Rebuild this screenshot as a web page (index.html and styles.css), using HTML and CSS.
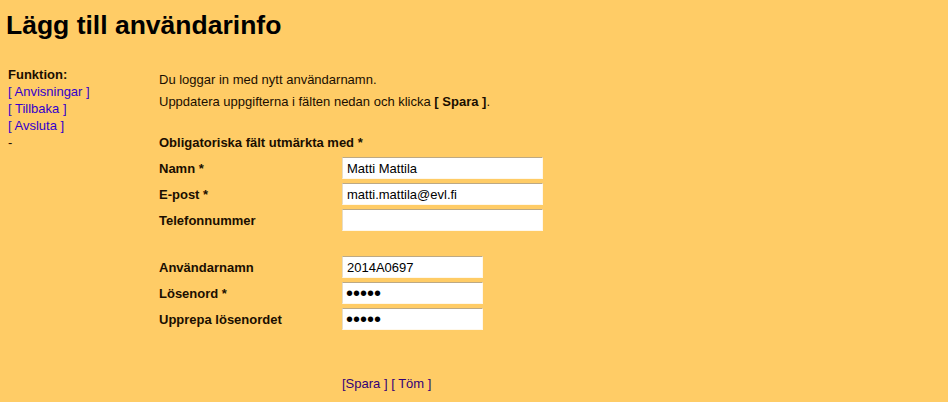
FILE: index.html
```html
<!DOCTYPE html>
<html lang="sv">
<head>
<meta charset="utf-8">
<title>Lägg till användarinfo</title>
<link rel="stylesheet" href="styles.css">
</head>
<body>
<h1 class="title">Lägg till användarinfo</h1>
<div class="layout">
  <nav class="sidebar">
    <div class="side-head">Funktion:</div>
    <a class="side-link" href="#">[ Anvisningar ]</a>
    <a class="side-link" href="#">[ Tillbaka ]</a>
    <a class="side-link" href="#">[ Avsluta ]</a>
    <div class="side-dash">-</div>
  </nav>
  <main class="main">
    <p class="info">Du loggar in med nytt användarnamn.</p>
    <p class="info">Uppdatera uppgifterna i fälten nedan och klicka <b>[ Spara ]</b>.</p>
    <p class="required">Obligatoriska fält utmärkta med *</p>
    <form class="form">
      <div class="group">
        <label class="label">Namn *</label>
        <input class="field wide" type="text" value="Matti Mattila">
        <label class="label">E-post *</label>
        <input class="field wide" type="text" value="matti.mattila@evl.fi">
        <label class="label">Telefonnummer</label>
        <input class="field wide" type="text" value="">
      </div>
      <div class="group second">
        <label class="label">Användarnamn</label>
        <input class="field narrow" type="text" value="2014A0697">
        <label class="label">Lösenord *</label>
        <input class="field narrow secret" type="password" value="12345">
        <label class="label">Upprepa lösenordet</label>
        <input class="field narrow secret" type="password" value="12345">
      </div>
      <div class="actions">
        <a class="action-link" href="#">[Spara ]</a> <a class="action-link" href="#">[ Töm ]</a>
      </div>
    </form>
  </main>
</div>
</body>
</html>
```

FILE: styles.css
```css
html, body {
  margin: 0;
  padding: 0;
  background: #ffcc66;
  font-family: "Liberation Sans", Arial, sans-serif;
  font-size: 13px;
  color: #1a0e00;
}

.title {
  margin: 0;
  padding: 10px 0 0 6px;
  font-size: 26.5px;
  line-height: 30px;
  font-weight: bold;
  color: #000;
}

.layout {
  display: flex;
  padding-top: 26px;
}

.sidebar {
  width: 151px;
  padding-left: 8px;
  display: flex;
  flex-direction: column;
  line-height: 17px;
}

.side-head {
  font-weight: bold;
}

.side-link {
  color: #3300cc;
  text-decoration: none;
}

.side-dash {
  color: #1a0e00;
}

.main {
  flex: 1;
  padding-top: 3px;
}

.info {
  margin: 0;
  line-height: 22px;
}

.required {
  margin: 19px 0 0;
  line-height: 22px;
  font-weight: bold;
}

.form {
  margin: 1px 0 0;
}

.group {
  display: grid;
  grid-template-columns: 183px auto;
  grid-auto-rows: 26px;
  align-items: center;
  justify-items: start;
}

.group.second {
  margin-top: 21px;
}

.label {
  font-weight: bold;
}

.field {
  box-sizing: border-box;
  height: 22px;
  margin: 0;
  padding: 0 4px;
  font-family: "Liberation Sans", Arial, sans-serif;
  font-size: 13px;
  color: #000;
  background: #fff;
  border: 1px solid #fff8ea;
  border-top-color: #bda984;
  border-left-color: #e6dcc6;
  outline: none;
}

.secret {
  font-size: 20px;
  padding: 0 3px;
}

.wide {
  width: 201px;
}

.narrow {
  width: 141px;
}

.actions {
  margin-top: 43px;
  padding-left: 183px;
  line-height: 17px;
}

.action-link {
  color: #330077;
  text-decoration: none;
}
```
